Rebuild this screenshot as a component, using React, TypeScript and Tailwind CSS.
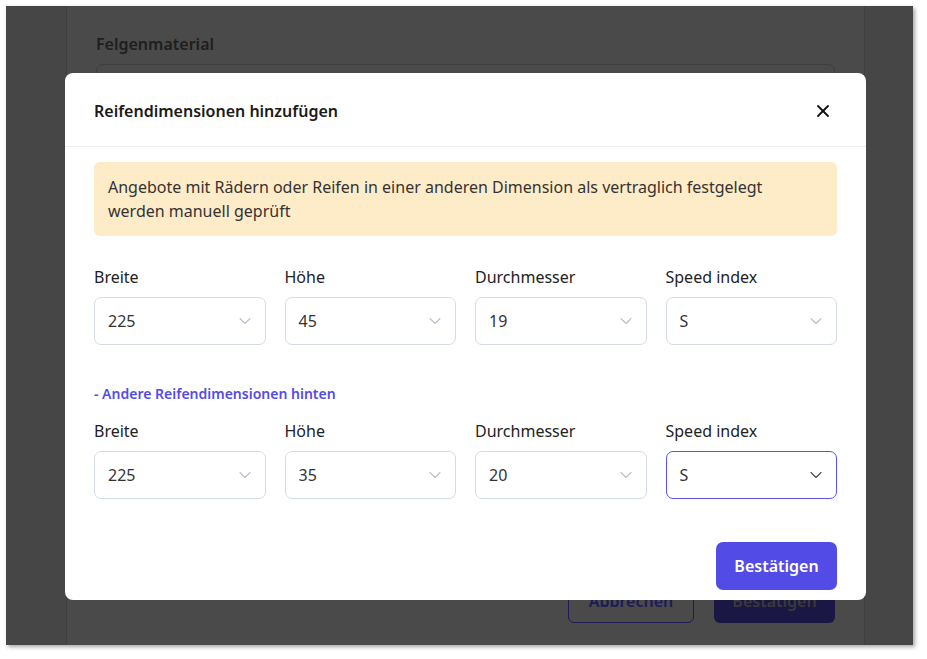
import { ChevronDown, X } from "lucide-react";

const font = { fontFamily: '"Noto Sans", "Open Sans", sans-serif' };

function Select({ label, value, active }: { label: string; value: string; active?: boolean }) {
  return (
    <div className="flex flex-col">
      <label className="text-[16px] leading-[22px] text-[#222]">{label}</label>
      <div
        className={`mt-[9px] flex h-[48px] items-center justify-between rounded-[7px] border bg-white pl-[13px] pr-[10px] text-[16px] text-[#333] ${
          active ? "border-[#5b54e8]" : "border-[#d4dbe6]"
        }`}
      >
        <span>{value}</span>
        <ChevronDown className={`h-5 w-5 ${active ? "text-[#444]" : "text-[#b9c0cc]"}`} strokeWidth={1.3} />
      </div>
    </div>
  );
}

export default function App() {
  return (
    <div className="h-[659px] w-[927px] bg-white p-[6px] pb-[14px] pr-[14px]" style={font}>
      <div className="relative h-full w-full overflow-hidden bg-[#464646] shadow-[2px_2px_4px_rgba(0,0,0,0.35)]">
        {/* page behind the overlay */}
        <div className="ml-[60px] mr-[48px] h-full border-x border-[#3f3f3f] bg-[#4a4a4a] px-[29px] pt-[26px]">
          <div className="text-[16px] font-semibold text-[#1e1e1e]">Felgenmaterial</div>
          <div className="mt-[8px] h-[47px] rounded-[7px] border border-[#3e3e3e]" />
          <div className="mt-[468px] flex justify-end gap-[20px]">
            <div className="flex h-[44px] w-[126px] items-center justify-center rounded-[6px] border border-[#1d1a55] text-[16px] font-semibold text-[#1d1a55]">
              Abbrechen
            </div>
            <div className="flex h-[44px] w-[121px] items-center justify-center rounded-[6px] bg-[#1b1745] text-[16px] font-semibold text-[#3a3a3a]">
              Bestätigen
            </div>
          </div>
        </div>

        {/* modal */}
        <div className="absolute left-[59px] top-[67px] w-[801px] rounded-[8px] bg-white">
          <div className="flex h-[74px] items-center justify-between border-b border-[#eceef2] pl-[29px] pr-[33px] pt-[2px]">
            <h2 className="text-[16px] font-semibold text-[#1a1a1a]">Reifendimensionen hinzufügen</h2>
            <X className="h-5 w-5 text-[#111]" strokeWidth={2.2} />
          </div>
          <div className="px-[29px] pb-[10px] pt-[15px]">
            <div className="rounded-[6px] bg-[#feebc8] py-[13px] pl-[14px] pr-[40px] text-[16px] leading-[24px] text-[#333]">
              Angebote mit Rädern oder Reifen in einer anderen Dimension als vertraglich festgelegt werden manuell geprüft
            </div>
            <div className="mt-[30px] grid grid-cols-4 gap-[19px]">
              <Select label="Breite" value="225" />
              <Select label="Höhe" value="45" />
              <Select label="Durchmesser" value="19" />
              <Select label="Speed index" value="S" />
            </div>
            <div className="mt-[38px] text-[14px] font-semibold text-[#554ce6]">- Andere Reifendimensionen hinten</div>
            <div className="mt-[16px] grid grid-cols-4 gap-[19px]">
              <Select label="Breite" value="225" />
              <Select label="Höhe" value="35" />
              <Select label="Durchmesser" value="20" />
              <Select label="Speed index" value="S" active />
            </div>
            <div className="mt-[43px] flex justify-end">
              <button className="h-[48px] w-[121px] rounded-[7px] bg-[#534be6] text-[16px] font-semibold text-white">
                Bestätigen
              </button>
            </div>
          </div>
        </div>
      </div>
    </div>
  );
}
